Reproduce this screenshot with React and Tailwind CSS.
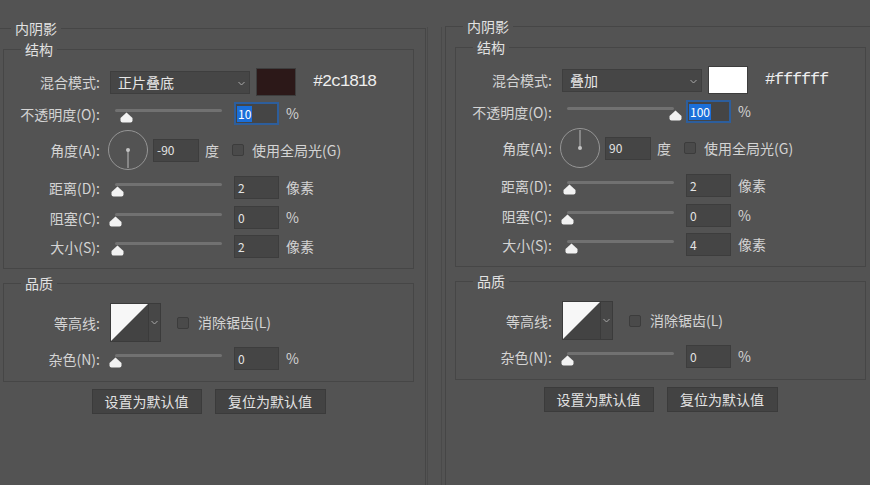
import React from 'react';

const PANELS = [
  {
    id: 'left',
    blend: '正片叠底',
    color: '#2c1818',
    swatch: 'bg-[#2c1818]',
    opacity: { value: '10', thumb: 16 },
    angle: -90,
    distance: { value: '2', thumb: 7 },
    choke: { value: '0', thumb: 5 },
    size: { value: '2', thumb: 7 },
    noise: { value: '0', thumb: 5 },
  },
  {
    id: 'right',
    blend: '叠加',
    color: '#ffffff',
    swatch: 'bg-[#ffffff]',
    opacity: { value: '100', thumb: 113 },
    angle: 90,
    distance: { value: '2', thumb: 7 },
    choke: { value: '0', thumb: 5 },
    size: { value: '4', thumb: 9 },
    noise: { value: '0', thumb: 5 },
  },
];

function Chevron() {
  return (
    <svg width="7" height="5" viewBox="0 0 7 5" fill="none">
      <polyline points="0.5,1 3.5,4 6.5,1" stroke="#a8a8a8" strokeWidth="1" />
    </svg>
  );
}

function Legend({ children }) {
  return (
    <div className="-mt-[10px] ml-[17px] w-fit bg-[#535353] px-[4px] leading-[18px] text-[#e2e2e2]">
      {children}
    </div>
  );
}

function Label({ children }) {
  return <div className="w-[97px] shrink-0 pr-[1px] text-right leading-[18px]">{children}</div>;
}

function NumberBox({ value, focused }) {
  if (focused) {
    return (
      <div className="flex h-[23px] w-[45px] shrink-0 items-center border-2 border-[#2d5e9c] bg-[#454545] pl-[1px] text-[12px]">
        <span className="bg-[#1b6fd9] px-[1px] leading-[16px] text-white">{value}</span>
      </div>
    );
  }
  return (
    <div className="flex h-[23px] w-[45px] shrink-0 items-center border border-[#3d3d3d] bg-[#454545] pl-[3px] text-[12px] text-[#e4e4e4]">
      {value}
    </div>
  );
}

function Slider({ thumb }) {
  return (
    <div className="relative h-[23px] w-[112px] shrink-0">
      <div className="ml-[5px] mt-[7px] h-[3px] w-[107px] rounded-full bg-[#717171]" />
      {/* thumb sits over the track */}
      <svg
        className="absolute top-[10px]"
        style={{ left: thumb - 6.5 }}
        width="13"
        height="11"
        viewBox="0 0 13 11"
      >
        <path d="M6.5 0.5 L12.5 6 L12.5 8.5 Q12.5 10.5 10.5 10.5 L2.5 10.5 Q0.5 10.5 0.5 8.5 L0.5 6 Z" fill="#f2f2f2" />
      </svg>
    </div>
  );
}

function SliderRow({ label, field, unit, focused, className }) {
  return (
    <div className={`flex h-[23px] items-center ${className}`}>
      <Label>{label}</Label>
      <div className="ml-[9px] flex items-center">
        <Slider thumb={field.thumb} />
        <div className="ml-[12px]">
          <NumberBox value={field.value} focused={focused} />
        </div>
        <span className="ml-[7px]">{unit}</span>
      </div>
    </div>
  );
}

function Checkbox() {
  return <div className="h-[12px] w-[12px] shrink-0 rounded-[2px] border border-[#3c3c3c] bg-[#4a4a4a]" />;
}

function Panel({ p, outerClass }) {
  return (
    <div className={`h-[480px] border-x border-t border-[#464646] ${outerClass}`}>
      <Legend>内阴影</Legend>

      {/* ── 结构 ───────────────── */}
      <div className="ml-[9px] mt-[12px] w-[411px] border border-[#464646] pb-[10px]">
        <Legend>结构</Legend>

        <div className="mt-[10px] flex h-[28px] items-center">
          <Label>混合模式:</Label>
          <div className="ml-[9px] flex h-[23px] w-[140px] items-center justify-between border border-[#3e3e3e] bg-[#464646] pl-[7px] pr-[4px] text-[#e6e6e6]">
            <span>{p.blend}</span>
            <span className="mt-[3px]"><Chevron /></span>
          </div>
          <div className={`ml-[6px] h-[28px] w-[40px] border border-[#3d3d3d] ${p.swatch}`} />
          <span className="ml-[17px] font-['Liberation_Mono',monospace] text-[17px] tracking-[-1.2px] text-[#eeeeee]">
            {p.color}
          </span>
        </div>

        <SliderRow className="mt-[6px]" label="不透明度(O):" field={p.opacity} unit="%" focused />

        <div className="mt-[5px] flex h-[40px] items-center">
          <Label>角度(A):</Label>
          <svg className="ml-[7px] shrink-0" width="40" height="40" viewBox="0 0 40 40">
            <circle cx="20" cy="20" r="19.5" fill="none" stroke="#959595" strokeWidth="1" />
            <line x1="20" y1="20" x2="20" y2={p.angle < 0 ? 38 : 2} stroke="#bcbcbc" strokeWidth="1" />
            <circle cx="20" cy="20" r="2" fill="#c4c4c4" />
          </svg>
          <div className="ml-[5px] flex h-[23px] w-[46px] items-center border border-[#3d3d3d] bg-[#454545] pl-[3px] text-[12px] text-[#e4e4e4]">
            {p.angle}
          </div>
          <span className="ml-[6px]">度</span>
          <div className="ml-[13px]"><Checkbox /></div>
          <span className="ml-[8px]">使用全局光(G)</span>
        </div>

        <SliderRow className="mt-[6px]" label="距离(D):" field={p.distance} unit="像素" />
        <SliderRow className="mt-[7px]" label="阻塞(C):" field={p.choke} unit="%" />
        <SliderRow className="mt-[6px]" label="大小(S):" field={p.size} unit="像素" />
      </div>

      {/* ── 品质 ───────────────── */}
      <div className="ml-[9px] mt-[14px] w-[411px] border border-[#464646] pb-[11px]">
        <Legend>品质</Legend>

        <div className="mt-[11px] flex h-[39px] items-center">
          <Label>等高线:</Label>
          <div className="ml-[9px] flex h-[39px]">
            <svg className="border border-[#3b3b3b]" width="39" height="39" viewBox="0 0 37 37">
              <rect width="37" height="37" fill="#434343" />
              <polygon points="0,0 37,0 0,37" fill="#f7f7f7" />
            </svg>
            <div className="flex w-[12px] items-center justify-center border border-l-0 border-[#3b3b3b] bg-[#474747]">
              <Chevron />
            </div>
          </div>
          <div className="ml-[16px]"><Checkbox /></div>
          <span className="ml-[9px]">消除锯齿(L)</span>
        </div>

        <SliderRow className="mt-[5px]" label="杂色(N):" field={p.noise} unit="%" />
      </div>

      <div className="ml-[9px] mt-[7px] flex w-[411px] justify-center gap-[13px]">
        <button className="h-[25px] w-[110px] border border-[#3b3b3b] bg-[#434343] text-[#e2e2e2]">设置为默认值</button>
        <button className="h-[25px] w-[111px] border border-[#3b3b3b] bg-[#434343] text-[#e2e2e2]">复位为默认值</button>
      </div>
    </div>
  );
}

export default function App() {
  return (
    <div className="flex h-[485px] w-[870px] overflow-hidden bg-[#535353] font-['Noto_Sans_CJK_SC',sans-serif] text-[14px] text-[#d4d4d4]">
      <div className="w-[427px] shrink-0 overflow-hidden pt-[28px]">
        <Panel p={PANELS[0]} outerClass="-ml-[7px] w-[433px]" />
      </div>
      <div className="mt-[27px] w-[15px] shrink-0 border-x border-[#4a4a4a]" />
      <div className="flex-1 overflow-hidden pt-[26px]">
        <Panel p={PANELS[1]} outerClass="ml-[3px] w-[440px]" />
      </div>
    </div>
  );
}
